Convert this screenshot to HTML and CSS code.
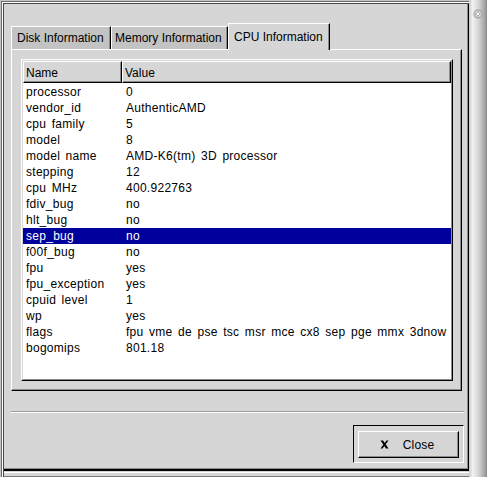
FILE: index.html
```
<!DOCTYPE html>
<html>
<head>
<meta charset="utf-8">
<link rel="stylesheet" href="styles.css">
</head>
<body>
<div class="wm">
  <div class="client">
    <div class="dialog">
      <div class="notebook">
        <div class="tabs">
          <div class="tab t-disk">Disk Information</div>
          <div class="tab t-mem">Memory Information</div>
          <div class="tab active t-cpu">CPU Information</div>
        </div>
        <div class="page">
          <div class="clist">
            <div class="clist-inner">
              <div class="header">
                <div class="hbtn h-name">Name</div>
                <div class="hbtn h-value">Value</div>
              </div>
              <div class="rows">
                <div class="row"><span class="c-name">processor</span><span class="c-val">0</span></div>
                <div class="row"><span class="c-name">vendor_id</span><span class="c-val">AuthenticAMD</span></div>
                <div class="row"><span class="c-name">cpu family</span><span class="c-val">5</span></div>
                <div class="row"><span class="c-name">model</span><span class="c-val">8</span></div>
                <div class="row"><span class="c-name">model name</span><span class="c-val">AMD-K6(tm) 3D processor</span></div>
                <div class="row"><span class="c-name">stepping</span><span class="c-val">12</span></div>
                <div class="row"><span class="c-name">cpu MHz</span><span class="c-val">400.922763</span></div>
                <div class="row"><span class="c-name">fdiv_bug</span><span class="c-val">no</span></div>
                <div class="row"><span class="c-name">hlt_bug</span><span class="c-val">no</span></div>
                <div class="row selected"><span class="c-name">sep_bug</span><span class="c-val">no</span></div>
                <div class="row"><span class="c-name">f00f_bug</span><span class="c-val">no</span></div>
                <div class="row"><span class="c-name">fpu</span><span class="c-val">yes</span></div>
                <div class="row"><span class="c-name">fpu_exception</span><span class="c-val">yes</span></div>
                <div class="row"><span class="c-name">cpuid level</span><span class="c-val">1</span></div>
                <div class="row"><span class="c-name">wp</span><span class="c-val">yes</span></div>
                <div class="row"><span class="c-name">flags</span><span class="c-val">fpu vme de pse tsc msr mce cx8 sep pge mmx 3dnow</span></div>
                <div class="row"><span class="c-name">bogomips</span><span class="c-val">801.18</span></div>
              </div>
            </div>
          </div>
        </div>
      </div>
      <div class="sep"></div>
      <div class="actions">
        <div class="defframe">
          <div class="btn">
            <svg class="xicon" width="9" height="9" viewBox="0 0 9 9">
              <path d="M0.5 0.5 L3 0.5 L8.5 8.5 L6 8.5 Z" fill="#000"/>
              <path d="M6.5 0.5 L8.5 0.5 L2.5 8.5 L0.5 8.5 Z" fill="#000"/>
            </svg>
            <span class="btn-label">Close</span>
          </div>
        </div>
      </div>
    </div>
  </div>
  <div class="titlebar">
    <svg class="knob" width="10" height="10" viewBox="0 0 10 10">
      <circle cx="5" cy="5" r="4.5" fill="#9a9a9a"/>
      <circle cx="5" cy="5" r="3.6" fill="#d8d8d8"/>
      <circle cx="5" cy="5" r="2.6" fill="#b0b0b0"/>
      <path d="M3.4 3.4 L6.6 6.6 M6.6 3.4 L3.4 6.6" stroke="#fff" stroke-width="1"/>
    </svg>
  </div>
</div>
</body>
</html>
```
FILE: styles.css
```
html, body {
  margin: 0;
  padding: 0;
  background: #d6d6d6;
}
body {
  font-family: "Liberation Sans", Arial, sans-serif;
  font-size: 12px;
  line-height: 16px;
  color: #000;
}
.wm {
  width: 487px;
  height: 477px;
  display: flex;
  overflow: hidden;
}
.client {
  width: 469px;
  height: 477px;
  box-sizing: border-box;
  padding: 4px 0 6px 4px;
  background: #d6d6d6;
  box-shadow:
    inset 1px 1px 0 #c4c4c4,
    inset 2px 2px 0 #6c6c6c,
    inset 3px 3px 0 #ffffff,
    inset 4px 4px 0 #4a4a4a,
    inset 0 -1px 0 #7a7a7a,
    inset 0 -4px 0 #d6d6d6,
    inset 0 -5px 0 #ffffff;
}
.dialog {
  width: 465px;
  height: 467px;
  box-sizing: border-box;
  border-right: 1px solid #000;
  border-bottom: 2px solid #000;
  box-shadow: inset -1px -1px 0 #8c8c8c;
  padding: 19px 0 0 7px;
}
.notebook {
  width: 451px;
}
.tabs {
  display: flex;
  align-items: flex-end;
  height: 26px;
}
.tab {
  box-sizing: border-box;
  height: 23px;
  padding: 3px 0 0 5px;
  background: #c3c3c3;
  border-top: 1px solid #fff;
  border-left: 1px solid #fff;
  border-right: 1px solid #000;
  box-shadow: inset -1px 0 0 #8c8c8c;
  white-space: nowrap;
}
.t-disk { width: 100px; }
.t-mem { width: 117px; padding-left: 3px; }
.tab.active {
  width: 102px;
  height: 27px;
  padding-top: 5px;
  margin-bottom: -1px;
  background: #d6d6d6;
  position: relative;
  z-index: 1;
}
.page {
  box-sizing: border-box;
  height: 342px;
  border-top: 1px solid #fff;
  border-left: 1px solid #fff;
  border-right: 1px solid #000;
  border-bottom: 1px solid #000;
  box-shadow: inset -1px -1px 0 #8c8c8c;
  padding: 9px 7px 8px 9px;
}
.clist {
  box-sizing: border-box;
  width: 432px;
  height: 322px;
  border: 1px solid;
  border-color: #fff #000 #000 #fff;
}
.clist-inner {
  box-sizing: border-box;
  height: 100%;
  border: 1px solid;
  border-color: #d6d6d6 #8c8c8c #8c8c8c #d6d6d6;
  background: #fff;
}
.header {
  display: flex;
  height: 22px;
}
.hbtn {
  box-sizing: border-box;
  height: 22px;
  padding: 3px 0 0 2px;
  background: #d6d6d6;
  border: 1px solid;
  border-color: #fff #000 #000 #fff;
  box-shadow: inset -1px -1px 0 #8c8c8c;
}
.h-name { width: 99px; }
.h-value { flex: 1; }
.rows {
  padding-top: 1px;
}
.row {
  display: flex;
  height: 16px;
  white-space: nowrap;
  letter-spacing: 0.28px;
  word-spacing: 1.9px;
}
.row.selected {
  background: #00009c;
  color: #fff;
}
.c-name {
  width: 96px;
  padding-left: 3px;
}
.c-val {
  padding-left: 4px;
}
.sep {
  width: 453px;
  margin-top: 20px;
  border-top: 1px solid #9c9c9c;
  border-bottom: 1px solid #fff;
}
.actions {
  width: 453px;
  margin-top: 12px;
  display: flex;
  justify-content: flex-end;
}
.defframe {
  box-sizing: border-box;
  width: 111px;
  height: 38px;
  border: 1px solid;
  border-color: #000 #fff #fff #000;
  padding: 5px 4px 4px 4px;
}
.btn {
  box-sizing: border-box;
  width: 101px;
  height: 27px;
  border: 1px solid;
  border-color: #fff #000 #000 #fff;
  box-shadow: inset -1px -1px 0 #8c8c8c;
  display: flex;
  align-items: center;
  justify-content: center;
  gap: 14px;
  padding-right: 3px;
}
.btn-label {
  letter-spacing: 0.2px;
}
.xicon {
  display: block;
}
.titlebar {
  width: 18px;
  height: 477px;
  background: linear-gradient(to right, #c8c8c8 0%, #f2f2f2 20%, #d8d8d8 50%, #a8a8a8 85%, #8a8a8a 100%);
}
.knob {
  display: block;
  margin: 9px 0 0 4px;
}
```
